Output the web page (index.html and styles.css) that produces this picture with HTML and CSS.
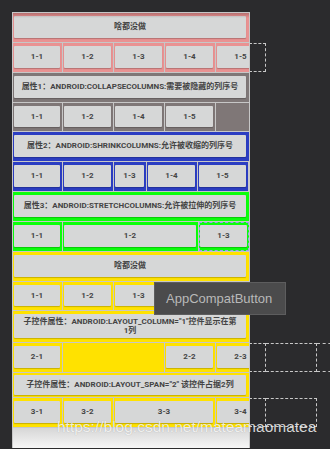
FILE: index.html
```html
<!DOCTYPE html>
<html lang="zh">
<head>
    <meta charset="UTF-8">
    <meta name="viewport" content="width=device-width, initial-scale=1.0">
    <title>TableLayout Preview</title>
    <link rel="stylesheet" href="styles.css">
</head>
<body>
<div class="stage">
    <div class="screen">

        <!-- table 1: nothing set -->
        <div class="line">
            <div class="row pink">
                <div class="cell full"><div class="btn">啥都没做</div></div>
            </div>
        </div>
        <div class="line">
            <div class="row pink">
                <div class="cell c49"><div class="btn">1-1</div></div>
                <div class="cell c50"><div class="btn">1-2</div></div>
                <div class="cell c50"><div class="btn">1-3</div></div>
                <div class="cell c50"><div class="btn">1-4</div></div>
                <div class="cell c50"><div class="btn">1-5</div></div>
            </div>
            <div class="ghost"><span class="g16"></span></div>
        </div>

        <!-- table 2: collapseColumns -->
        <div class="line">
            <div class="row taupe">
                <div class="cell full"><div class="btn">属性1：ANDROID:COLLAPSECOLUMNS:需要被隐藏的列序号</div></div>
            </div>
        </div>
        <div class="line short">
            <div class="row taupe">
                <div class="cell c49"><div class="btn">1-1</div></div>
                <div class="cell c50"><div class="btn">1-2</div></div>
                <div class="cell c50"><div class="btn">1-4</div></div>
                <div class="cell c50"><div class="btn">1-5</div></div>
                <div class="cell fill"></div>
            </div>
        </div>

        <!-- table 3: shrinkColumns -->
        <div class="line">
            <div class="row blue">
                <div class="cell full"><div class="btn">属性2：ANDROID:SHRINKCOLUMNS:允许被收缩的列序号</div></div>
            </div>
        </div>
        <div class="line">
            <div class="row blue">
                <div class="cell c49"><div class="btn">1-1</div></div>
                <div class="cell c50"><div class="btn">1-2</div></div>
                <div class="cell c32"><div class="btn">1-3</div></div>
                <div class="cell c50"><div class="btn">1-4</div></div>
                <div class="cell c50"><div class="btn">1-5</div></div>
            </div>
        </div>

        <!-- table 4: stretchColumns -->
        <div class="line">
            <div class="row green">
                <div class="cell full"><div class="btn">属性3：ANDROID:STRETCHCOLUMNS:允许被拉伸的列序号</div></div>
            </div>
        </div>
        <div class="line">
            <div class="row green">
                <div class="cell c49"><div class="btn">1-1</div></div>
                <div class="cell c135"><div class="btn">1-2</div></div>
                <div class="cell c50 selected"><div class="btn">1-3</div></div>
            </div>
        </div>

        <!-- table 5: child attributes -->
        <div class="line">
            <div class="row yellow">
                <div class="cell full"><div class="btn">啥都没做</div></div>
            </div>
        </div>
        <div class="line short">
            <div class="row yellow">
                <div class="cell c49"><div class="btn">1-1</div></div>
                <div class="cell c50"><div class="btn">1-2</div></div>
                <div class="cell c50"><div class="btn">1-3</div></div>
                <!-- 1-4 and 1-5 sit under the tooltip -->
                <div class="cell c50"><div class="btn"></div></div>
                <div class="cell c50"><div class="btn"></div></div>
            </div>
            <div class="ghost"><span class="g16"></span></div>
        </div>
        <div class="line tall">
            <div class="row yellow">
                <div class="cell full"><div class="btn">子控件属性：ANDROID:LAYOUT_COLUMN="1"控件显示在第<br>1列</div></div>
            </div>
        </div>
        <div class="line">
            <div class="row yellow">
                <div class="cell c49"><div class="btn">2-1</div></div>
                <div class="cell c101"></div>
                <div class="cell c50"><div class="btn">2-2</div></div>
                <div class="cell c50"><div class="btn">2-3</div></div>
            </div>
            <div class="ghost"><span class="g16"></span><span class="g51"></span><span class="open"></span></div>
        </div>
        <div class="line mini">
            <div class="row yellow">
                <div class="cell full"><div class="btn">子控件属性：ANDROID:LAYOUT_SPAN="2" 该控件占据2列</div></div>
            </div>
        </div>
        <div class="line">
            <div class="row yellow">
                <div class="cell c49"><div class="btn">3-1</div></div>
                <div class="cell c50"><div class="btn">3-2</div></div>
                <div class="cell c101"><div class="btn">3-3</div></div>
                <div class="cell c50"><div class="btn">3-4</div></div>
            </div>
            <div class="ghost"><span class="g16"></span><span class="g51"></span></div>
        </div>

        <div class="foot"></div>
    </div>

    <div class="tooltip">AppCompatButton</div>
    <div class="watermark">https://blog.csdn.net/mateamaomatea</div>
</div>
</body>
</html>
```

FILE: styles.css
```css
body {
    margin: 0;
    background: #2b2b2d;
    font-family: Roboto, "Noto Sans CJK SC", sans-serif;
}

.stage {
    position: relative;
    width: 330px;
    height: 449px;
    overflow: hidden;
}

/* device screen, light grey shows through as the table dividers */
.screen {
    position: relative;
    margin: 12px 0 0 12px;
    padding-top: 1px;
    background: linear-gradient(to right, #c7c7c7 238px, transparent 238px);
}

/* app bar shadow falling over the first row */
.screen::before {
    content: "";
    position: absolute;
    left: 1px;
    top: 1px;
    width: 236px;
    height: 5px;
    background: linear-gradient(rgba(60, 30, 30, 0.3), rgba(60, 30, 30, 0));
}

.line {
    display: flex;
    height: 29px;
    margin-bottom: 1px;
}

.line.short { height: 28px; }
.line.tall { height: 31px; }
.line.mini { height: 24px; }

.row {
    flex: none;
    display: flex;
    gap: 1px;
    width: 236px;
    margin: 0 1px;
    overflow: hidden;
}

.cell {
    flex: none;
    display: flex;
}

.cell.full { width: 236px; }
.cell.fill { flex: 1; }
.c32 { width: 32px; }
.c49 { width: 49px; }
.c50 { width: 50px; }
.c101 { width: 101px; }
.c135 { width: 135px; }

.pink > .cell { background: #e99292; }
.taupe > .cell { background: #7f7777; }
.blue > .cell { background: #2b3dc2; }
.green > .cell { background: #0bff0b; }
.yellow > .cell { background: #ffe200; }

.cell.selected {
    outline: 1px dashed #9a9cf0;
    outline-offset: -1px;
}

.btn {
    flex: 1;
    display: flex;
    align-items: center;
    justify-content: center;
    margin: 3px 2px 4px 1px;
    background: #d6d7d7;
    border-radius: 1px;
    box-shadow: 0 1px 1px rgba(0, 0, 0, 0.22);
    color: #444444;
    font-size: 8px;
    font-weight: 700;
    line-height: 9.5px;
    text-align: center;
    white-space: nowrap;
}

.full > .btn { margin-right: 3px; }
.mini .btn { margin: 2px 3px 2px 1px; }

/* layout editor bounds of cells that run past the screen */
.ghost {
    display: flex;
    margin-left: -1px;
}

.ghost span {
    box-sizing: border-box;
    height: 100%;
    border: 1px dashed #c8c8c8;
    border-left: none;
}

.ghost .g16 { width: 17px; }
.ghost .g51 { width: 51px; }
.ghost .open { width: 20px; border-right: none; }

.foot {
    width: 236px;
    height: 20px;
    margin-left: 1px;
    background: linear-gradient(#d6d6d6, #f6f6f6);
}

.tooltip {
    position: absolute;
    left: 154px;
    top: 282px;
    box-sizing: border-box;
    width: 132px;
    height: 33px;
    padding-left: 11px;
    background: #4b4b4c;
    border: 1px solid #5d5d5e;
    color: #b9b9b9;
    font-family: "Liberation Sans", sans-serif;
    font-size: 13px;
    line-height: 31px;
}

.watermark {
    position: absolute;
    left: 57px;
    top: 418px;
    color: rgba(255, 255, 255, 0.82);
    font-family: "Liberation Sans", sans-serif;
    font-size: 15.5px;
    text-shadow: 0 0 1px rgba(0, 0, 0, 0.25);
}
```
